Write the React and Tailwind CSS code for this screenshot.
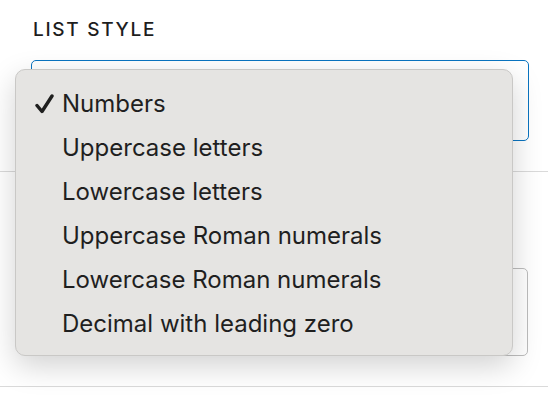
const options = [
  "Numbers",
  "Uppercase letters",
  "Lowercase letters",
  "Uppercase Roman numerals",
  "Lowercase Roman numerals",
  "Decimal with leading zero",
];

function Check() {
  return (
    <svg width="19" height="20" viewBox="0 0 19 20" className="shrink-0">
      <path d="M2 11.5 L7 17.5 L17 2" fill="none" stroke="#1f1f1f" strokeWidth="3.4" strokeLinecap="round" strokeLinejoin="round" />
    </svg>
  );
}

export default function App() {
  const selected = "Numbers";
  return (
    <div className="relative h-[416px] w-[548px] overflow-hidden bg-white font-['Inter',sans-serif] text-[#1e1e1e]">
      <div className="pt-[18px]">
        <p className="pl-[33px] text-[19px] font-medium leading-6 tracking-[1.7px]">LIST STYLE</p>
        <div className="ml-[31px] mt-[18px] h-[81px] w-[498px] rounded-[5px] border border-[#0a74c0] bg-white" />
        <div className="mt-[30px] h-px w-full bg-[#dadada]" />
        <div className="ml-[31px] mt-[96px] h-[88px] w-[497px] rounded-[5px] border border-[#bdbdbd] bg-white" />
        <div className="mt-[30px] h-px w-full bg-[#dadada]" />
      </div>

      <ul className="absolute left-[15px] top-[69px] w-[498px] rounded-[10px] border border-[#c9c8c6] bg-[#e5e4e2] pb-[9px] pt-[12px] shadow-[0_10px_30px_rgba(0,0,0,0.18)]">
        {options.map((o) => (
          <li key={o} className="flex h-[44px] items-center text-[24px] leading-[44px] text-[#1f1f1f]">
            <span className="flex w-[46px] justify-end pr-[8px]">{o === selected && <Check />}</span>
            <span>{o}</span>
          </li>
        ))}
      </ul>
    </div>
  );
}
